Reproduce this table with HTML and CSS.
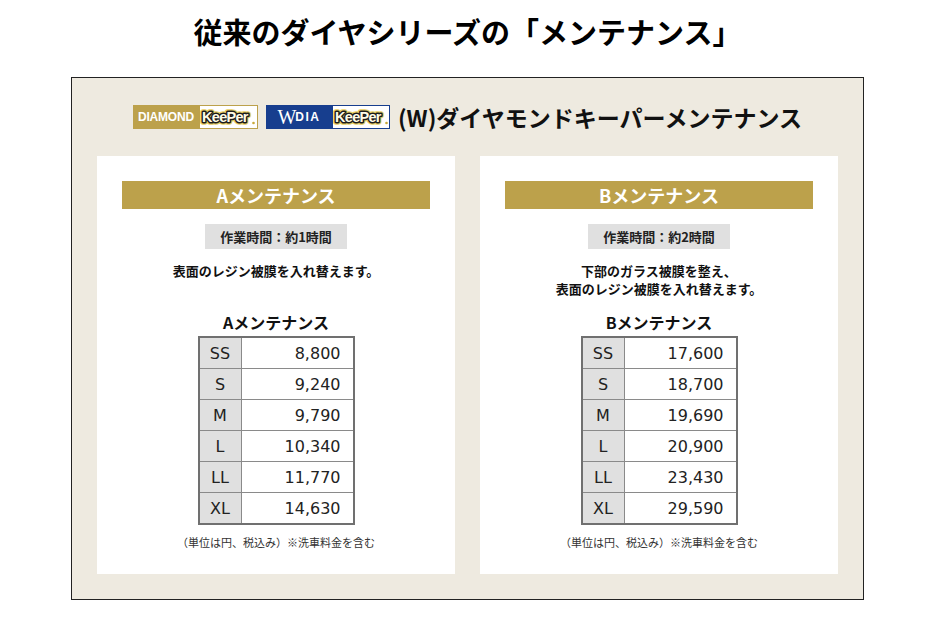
FILE: index.html
```html
<!DOCTYPE html>
<html lang="ja">
<head>
<meta charset="utf-8">
<title>従来のダイヤシリーズの「メンテナンス」</title>
<link rel="stylesheet" href="styles.css">
</head>
<body>
<div class="page">
  <h1 class="title">従来のダイヤシリーズの「メンテナンス」</h1>
  <section class="box">
    <div class="brand-row">
      <div class="logo logo-gold">
        <span class="logo-left">DIAMOND</span>
        <span class="logo-right">
          <svg class="keeper" width="56" height="20" viewBox="0 0 56 20">
            <text class="kp-glow" x="2" y="15">KeePer</text>
            <text class="kp-line" x="2" y="15">KeePer</text>
            <circle cx="53.5" cy="16" r="1.3" fill="#c9a93a"/>
          </svg>
        </span>
      </div>
      <div class="logo logo-blue">
        <span class="logo-left"><span class="w">W</span><span class="dia">DIA</span></span>
        <span class="logo-right">
          <svg class="keeper" width="56" height="20" viewBox="0 0 56 20">
            <text class="kp-glow" x="2" y="15">KeePer</text>
            <text class="kp-line" x="2" y="15">KeePer</text>
            <circle cx="53.5" cy="16" r="1.3" fill="#c9a93a"/>
          </svg>
        </span>
      </div>
      <h2 class="brand-title">(W)ダイヤモンドキーパーメンテナンス</h2>
    </div>
    <div class="cards">
      <div class="card">
        <div class="card-bar">Aメンテナンス</div>
        <div class="pill">作業時間：約1時間</div>
        <p class="desc">表面のレジン被膜を入れ替えます。</p>
        <h3 class="table-title">Aメンテナンス</h3>
        <table class="price">
          <tr><th>SS</th><td>8,800</td></tr>
          <tr><th>S</th><td>9,240</td></tr>
          <tr><th>M</th><td>9,790</td></tr>
          <tr><th>L</th><td>10,340</td></tr>
          <tr><th>LL</th><td>11,770</td></tr>
          <tr><th>XL</th><td>14,630</td></tr>
        </table>
        <p class="note">（単位は円、税込み）※洗車料金を含む</p>
      </div>
      <div class="card">
        <div class="card-bar">Bメンテナンス</div>
        <div class="pill">作業時間：約2時間</div>
        <p class="desc">下部のガラス被膜を整え、<br>表面のレジン被膜を入れ替えます。</p>
        <h3 class="table-title">Bメンテナンス</h3>
        <table class="price">
          <tr><th>SS</th><td>17,600</td></tr>
          <tr><th>S</th><td>18,700</td></tr>
          <tr><th>M</th><td>19,690</td></tr>
          <tr><th>L</th><td>20,900</td></tr>
          <tr><th>LL</th><td>23,430</td></tr>
          <tr><th>XL</th><td>29,590</td></tr>
        </table>
        <p class="note">（単位は円、税込み）※洗車料金を含む</p>
      </div>
    </div>
  </section>
</div>
</body>
</html>
```

FILE: styles.css
```css
html, body {
  margin: 0;
  padding: 0;
  background: #ffffff;
}

body {
  font-family: "Noto Sans CJK JP", "Noto Sans", sans-serif;
  color: #111111;
}

.page {
  display: flex;
  flex-direction: column;
  align-items: center;
  padding-top: 11px;
}

.title {
  margin: 0;
  font-size: 29px;
  line-height: 40px;
  font-weight: 700;
  color: #000000;
}

.box {
  margin-top: 26px;
  width: 741px;
  padding: 27px 25px 25px;
  background: #eeeae0;
  border: 1px solid #222222;
}

.brand-row {
  display: flex;
  align-items: center;
  justify-content: center;
  gap: 8px;
  height: 24px;
  margin-bottom: 27px;
}

.logo {
  display: flex;
  height: 24px;
  box-sizing: border-box;
}

.logo-left {
  display: flex;
  align-items: center;
  justify-content: center;
  width: 66px;
  color: #ffffff;
  font-family: "Liberation Sans", sans-serif;
}

.logo-right {
  display: flex;
  align-items: center;
  justify-content: center;
  flex: 1;
  background: #ffffff;
  box-sizing: border-box;
}

.logo-gold {
  width: 125px;
  background: #bca14b;
}

.logo-gold .logo-left {
  font-size: 12px;
  font-weight: 700;
  letter-spacing: -0.2px;
}

.logo-gold .logo-right {
  border: 1px solid #bca14b;
}

.logo-blue {
  width: 124px;
  background: #173e8e;
}

.logo-blue .logo-left {
  gap: 2px;
}

.logo-blue .logo-right {
  border: 1px solid #173e8e;
}

.w {
  font-family: "Liberation Serif", serif;
  font-size: 20px;
  line-height: 20px;
  font-weight: 400;
  letter-spacing: -3px;
}

.dia {
  font-size: 12px;
  font-weight: 700;
  letter-spacing: 1.5px;
}

.keeper {
  display: block;
}

.keeper text {
  font-family: "Liberation Sans", sans-serif;
  font-size: 14.5px;
  font-weight: 700;
  letter-spacing: -0.7px;
}

.kp-glow {
  fill: #e9cf63;
  stroke: #e9cf63;
  stroke-width: 5.5px;
  stroke-linejoin: round;
}

.kp-line {
  fill: #fffbe6;
  stroke: #1c1c1c;
  stroke-width: 3px;
  stroke-linejoin: round;
  paint-order: stroke fill;
}

.brand-title {
  margin: 0;
  font-size: 23px;
  line-height: 24px;
  font-weight: 700;
  color: #111111;
}

.cards {
  display: flex;
  gap: 25px;
}

.card {
  width: 308px;
  height: 368px;
  padding: 25px;
  background: #ffffff;
  display: flex;
  flex-direction: column;
  align-items: center;
}

.card > * {
  flex-shrink: 0;
}

.card-bar {
  align-self: stretch;
  height: 28px;
  line-height: 28px;
  background: #bca14b;
  color: #ffffff;
  font-size: 18px;
  font-weight: 700;
  text-align: center;
}

.pill {
  margin-top: 15px;
  height: 25px;
  line-height: 25px;
  padding: 0 15px;
  background: #e0e0e0;
  font-size: 13px;
  font-weight: 700;
  color: #222222;
}

.desc {
  margin: 13px 0 0;
  height: 36px;
  line-height: 18px;
  font-size: 13px;
  font-weight: 700;
  text-align: center;
  color: #111111;
}

.table-title {
  margin: 13px 0 0;
  font-size: 16px;
  line-height: 22px;
  font-weight: 700;
  color: #111111;
}

.price {
  margin-top: 3px;
  border-collapse: collapse;
  border: 2px solid #707070;
  font-family: "DejaVu Sans", "Noto Sans CJK JP", sans-serif;
  font-size: 16px;
  color: #222222;
}

.price th,
.price td {
  height: 30px;
  padding: 0;
  border: 1px solid #8a8a8a;
  font-weight: 400;
}

.price th {
  width: 41px;
  background: #e0e0e0;
  text-align: center;
}

.price td {
  width: 99px;
  padding-right: 12px;
  text-align: right;
}

.note {
  margin: 9px 0 0;
  font-size: 11px;
  line-height: 16px;
  color: #333333;
}
```
